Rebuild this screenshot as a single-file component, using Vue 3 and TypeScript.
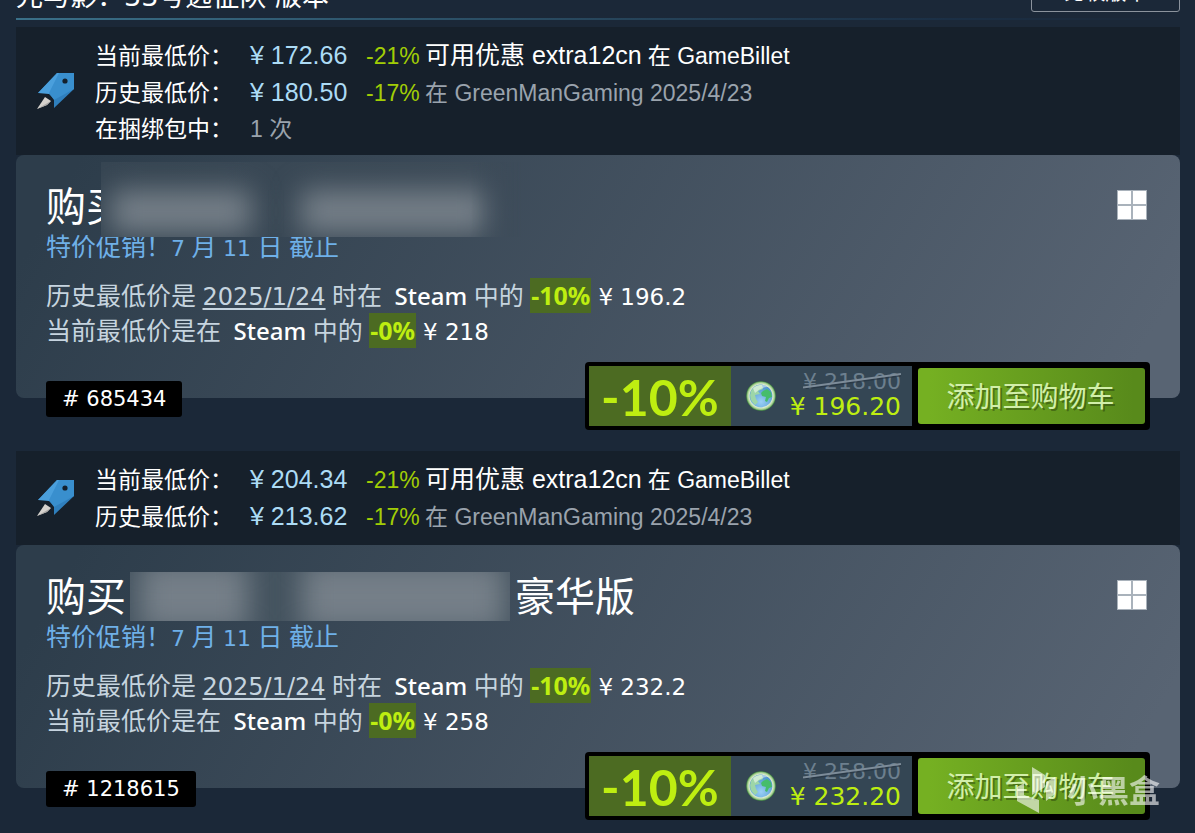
<script setup lang="ts">
interface PriceRow {
  label: string
  price?: string
  cut?: string
  promo?: string
  code?: string
  shop?: string
  count?: string
}

interface Offer {
  id: string
  suffix: string
  soft: boolean
  rows: PriceRow[]
  lowest: string
  current: string
  original: string
  final: string
}

const offers: Offer[] = [
  {
    id: '685434',
    suffix: '',
    soft: true,
    rows: [
      { label: '当前最低价：', price: '¥ 172.66', cut: '-21%', promo: '可用优惠', code: 'extra12cn', shop: '在 GameBillet' },
      { label: '历史最低价：', price: '¥ 180.50', cut: '-17%', shop: '在 GreenManGaming 2025/4/23' },
      { label: '在捆绑包中：', count: '1 次' },
    ],
    lowest: '¥ 196.2',
    current: '¥ 218',
    original: '¥ 218.00',
    final: '¥ 196.20',
  },
  {
    id: '1218615',
    suffix: '豪华版',
    soft: false,
    rows: [
      { label: '当前最低价：', price: '¥ 204.34', cut: '-21%', promo: '可用优惠', code: 'extra12cn', shop: '在 GameBillet' },
      { label: '历史最低价：', price: '¥ 213.62', cut: '-17%', shop: '在 GreenManGaming 2025/4/23' },
    ],
    lowest: '¥ 232.2',
    current: '¥ 258',
    original: '¥ 258.00',
    final: '¥ 232.20',
  },
]
</script>

<template>
  <main class="page">
    <header class="head">
      <h1>光与影：33号远征队 版本</h1>
      <button class="compare" type="button">比较版本</button>
    </header>
    <div class="rule"></div>

    <section v-for="offer in offers" :key="offer.id" class="offer">
      <div class="history">
        <svg class="rocket" viewBox="0 0 38 38" aria-hidden="true">
          <path d="M20 1H37V17L17 36V27L11 21L1 21Z" fill="#2f7fbd" />
          <path d="M20 1H37L12 22L1 21Z" fill="#4a9fdc" />
          <path d="M22 1H37V17L17 28L12 21Z" fill="#398fce" />
          <path d="M8 25L14 29L10 33L0 37Z" fill="#d6d2cd" />
          <path d="M14 29L10 33L0 37Z" fill="#a9a7a5" />
          <circle cx="28" cy="9" r="2.6" fill="#14202c" />
        </svg>
        <div class="rows">
          <div v-for="row in offer.rows" :key="row.label" class="row">
            <span class="label">{{ row.label }}</span>
            <span v-if="row.price" class="price">{{ row.price }}</span>
            <span v-if="row.cut" class="cut">{{ row.cut }}</span>
            <span v-if="row.promo" class="promo">{{ row.promo }} {{ row.code }}</span>
            <span v-if="row.shop" :class="['shop', { bright: row.promo }]">{{ row.shop }}</span>
            <span v-if="row.count" class="count">{{ row.count }}</span>
          </div>
        </div>
      </div>

      <article class="card">
        <svg class="windows" viewBox="0 0 30 30" aria-hidden="true">
          <path d="M0 0H30V30H0Z" fill="#a9b2bb" />
          <path d="M1 1H14V14H1ZM16 1H29V14H16ZM1 16H14V29H1ZM16 16H29V29H16Z" fill="#fff" />
        </svg>
        <h2 class="title">
          <span>购买</span>
          <span :class="['mask', { soft: offer.soft }]"></span>
          <span v-if="offer.suffix">{{ offer.suffix }}</span>
        </h2>
        <p class="sale">特价促销！<span class="num">7</span> 月 <span class="num">11</span> 日 截止</p>
        <p class="line">
          历史最低价是 <a class="date" href="#">2025/1/24</a> 时在
          <span class="store">Steam</span> 中的 <b class="off">-10%</b>
          <span class="value">{{ offer.lowest }}</span>
        </p>
        <p class="line">
          当前最低价是在
          <span class="store">Steam</span> 中的 <b class="off">-0%</b>
          <span class="value">{{ offer.current }}</span>
        </p>
        <footer class="foot">
          <span class="tag"># {{ offer.id }}</span>
          <div class="cart">
            <span class="discount">-10%</span>
            <div class="prices">
              <svg class="globe" viewBox="0 0 30 30" aria-hidden="true">
                <defs>
                  <radialGradient :id="'sea' + offer.id" cx="50%" cy="75%" r="70%">
                    <stop offset="0" stop-color="#9ad0f5" />
                    <stop offset="1" stop-color="#4a92cc" />
                  </radialGradient>
                  <radialGradient :id="'rim' + offer.id">
                    <stop offset="0.78" stop-color="#e2f0d2" />
                    <stop offset="0.9" stop-color="#a9d096" />
                    <stop offset="1" stop-color="#3f8b3c" />
                  </radialGradient>
                </defs>
                <circle cx="15" cy="15" r="14.8" :fill="'url(#rim' + offer.id + ')'" />
                <circle cx="15" cy="15" r="11.4" :fill="'url(#sea' + offer.id + ')'" />
                <path d="M5 10Q9 3 16 4L17 8L12 10L14 13L9 14L10 18L12 21L9 24Q2 18 5 10Z" fill="#9dd6a8" />
                <path d="M17 10L21 8L25 11L26 16L23 17L21 21L19 20L20 16L16 15L15 12Z" fill="#45bd6c" />
                <path d="M7 7Q14 1 22 6Q15 6 9 12Z" fill="#fff" opacity=".5" />
              </svg>
              <div class="amounts">
                <span class="was">{{ offer.original }}
                  <svg class="slash" viewBox="0 0 98 16" preserveAspectRatio="none" aria-hidden="true">
                    <path d="M0 16L98 2.5" stroke="#23303d" stroke-width="2" opacity=".6" />
                    <path d="M0 14.5L98 1" stroke="#7d8c99" stroke-width="1.8" />
                  </svg>
                </span>
                <span class="now">{{ offer.final }}</span>
              </div>
            </div>
            <button class="add" type="button">添加至购物车</button>
          </div>
        </footer>
      </article>
    </section>

    <div class="watermark">
      <svg viewBox="0 0 39 46" aria-hidden="true">
        <path d="M1 20L8 16V28L23 33V46L1 34ZM16 0L29 8V20L16 28ZM30 15L39 10V27L30 34Z" fill="#fff" />
      </svg>
      <span>小黑盒</span>
    </div>
  </main>
</template>

<style>
html,
body {
  margin: 0;
  background: #1b2838;
  overflow: hidden;
}
</style>

<style scoped>
.page {
  position: relative;
  box-sizing: border-box;
  height: 100vh;
  overflow: hidden;
  padding: 0 15px 0 16px;
  background: #1b2838;
  color: #fff;
  font-family: "Noto Sans", "Noto Sans CJK SC", sans-serif;
}
.head {
  display: flex;
  justify-content: space-between;
  align-items: flex-end;
  height: 18px;
}
h1 {
  margin: 0;
  padding-bottom: 2px;
  font-family: "DejaVu Sans", "Noto Sans CJK SC", sans-serif;
  font-size: 27px;
  line-height: 38px;
  font-weight: 400;
}
.compare {
  box-sizing: border-box;
  width: 149px;
  height: 44px;
  margin-bottom: 6px;
  padding: 0;
  border: 1px solid #8b939d;
  border-radius: 3px;
  background: transparent;
  color: #fff;
  font-family: "Noto Sans CJK SC", sans-serif;
  font-size: 21px;
}
.rule {
  height: 2px;
  margin-bottom: 7px;
  background: linear-gradient(to right, #3a7089, #27465c 50%, #1b2f45 80%, #1b2838);
}
.history {
  display: flex;
  box-sizing: border-box;
  min-height: 94px;
  padding: 0 21px;
  background: #16202b;
  font-family: "Liberation Sans", "Noto Sans CJK SC", sans-serif;
}
.rocket {
  align-self: center;
  flex: none;
  width: 38px;
  height: 38px;
  margin-right: 20px;
}
.rows {
  padding: 10px 0 7px;
}
.row {
  display: flex;
  align-items: baseline;
  height: 37px;
  line-height: 37px;
  font-size: 23px;
  white-space: nowrap;
}
.label {
  width: 155px;
}
.price {
  width: 116px;
  color: #acdbf5;
  font-size: 25px;
}
.cut {
  width: 59px;
  color: #a1cd05;
}
.promo {
  margin-right: 6px;
  font-size: 25px;
}
.shop,
.count {
  color: #9aa3ad;
}
.shop.bright {
  color: #fff;
}
.card {
  position: relative;
  display: flex;
  flex-direction: column;
  margin-bottom: 53px;
  padding: 26px 30px 0;
  border-radius: 8px;
  background: linear-gradient(-60deg, #586473 5%, #2d3d4b 95%);
}
.windows {
  position: absolute;
  top: 35px;
  right: 33px;
  width: 30px;
  height: 30px;
}
.title {
  display: flex;
  align-items: center;
  height: 50px;
  margin: 0;
  font-size: 40px;
  line-height: 50px;
  font-weight: 400;
  white-space: nowrap;
}
.mask {
  position: relative;
  overflow: hidden;
  width: 380px;
  height: 49px;
  margin: 0 5px 0 4px;
  background: #44535f;
}
.mask::before,
.mask::after {
  content: "";
  position: absolute;
  top: -10px;
  bottom: -10px;
  background: #757f88;
  filter: blur(14px);
}
.mask::before {
  left: 10px;
  width: 108px;
}
.mask::after {
  left: 172px;
  right: 5px;
}
.mask.soft {
  align-self: flex-end;
  width: 420px;
  height: 75px;
  margin: 0 0 -6px -25px;
  background: linear-gradient(to right, #364552, #3e4c59);
  mask-image: linear-gradient(to right, #000 88%, transparent), linear-gradient(#000, transparent 12%);
  mask-image: linear-gradient(to right, #000 88%, transparent);
}
.mask.soft::before,
.mask.soft::after {
  top: 28px;
  bottom: 4px;
}
.mask.soft::before {
  left: 10px;
  width: 140px;
}
.mask.soft::after {
  left: 200px;
  right: 32px;
}
.sale {
  height: 28px;
  margin: 1px 0 18px;
  color: #6fb0e8;
  font-size: 25px;
  line-height: 28px;
}
.line {
  height: 35px;
  margin: 0;
  color: #c6d4df;
  font-size: 25px;
  line-height: 35px;
  white-space: nowrap;
}
.num {
  font-family: "DejaVu Sans", sans-serif;
  font-size: 22px;
}
.date {
  color: inherit;
  font-family: "DejaVu Sans", sans-serif;
  font-size: 24px;
  text-decoration-thickness: 2px;
  text-underline-offset: 3px;
}
.store {
  margin-left: 6px;
  color: #fff;
  font-size: 24px;
  font-weight: 500;
}
.off {
  display: inline-block;
  height: 35px;
  background: #4c6b22;
  color: #beee11;
  font-size: 25px;
  line-height: 35px;
  vertical-align: top;
  padding: 0 1px;
}
.value {
  margin-left: 7px;
  color: #fff;
  font-family: "DejaVu Sans", sans-serif;
  font-size: 23px;
}
.foot {
  display: flex;
  justify-content: space-between;
  align-items: flex-end;
  margin: 14px 0 -32px;
}
.tag {
  margin-bottom: 13px;
  padding: 0 16px;
  border-radius: 3px;
  background: #000;
  font-family: "DejaVu Sans", sans-serif;
  font-size: 21px;
  line-height: 36px;
}
.cart {
  display: flex;
  align-items: center;
  padding: 4px 5px 4px 4px;
  border-radius: 4px;
  background: #000;
}
.discount {
  height: 60px;
  padding: 0 12px;
  background: #4c6b22;
  color: #beee11;
  font-family: Lato, sans-serif;
  font-size: 50px;
  font-weight: 700;
  line-height: 62px;
}
.prices {
  display: flex;
  align-items: center;
  gap: 14px;
  height: 60px;
  margin-right: 6px;
  padding: 0 11px 0 15px;
  background: #344654;
  font-family: "DejaVu Sans", sans-serif;
}
.globe {
  width: 30px;
  height: 30px;
}
.amounts {
  display: flex;
  flex-direction: column;
  align-items: flex-end;
  padding-bottom: 4px;
}
.was {
  position: relative;
  color: #6c7f8e;
  font-size: 22px;
  line-height: 25px;
}
.slash {
  position: absolute;
  left: 0;
  top: 4px;
  width: 100%;
  height: 16px;
}
.now {
  color: #beee11;
  font-size: 25px;
  line-height: 25px;
}
.add {
  width: 227px;
  height: 56px;
  padding: 0 2px 2px 0;
  border: 0;
  border-radius: 3px;
  background: linear-gradient(to right, #75b022 5%, #588a1b 95%);
  color: #d2efa9;
  font-family: "Noto Sans CJK SC", sans-serif;
  font-size: 28px;
  text-shadow: 2px 2px 0 rgba(0, 0, 0, 0.3);
}
.watermark {
  position: absolute;
  right: 35px;
  bottom: 20px;
  display: flex;
  align-items: center;
  gap: 12px;
  opacity: 0.6;
  font-size: 31px;
  line-height: 46px;
  font-weight: 700;
}
.watermark svg {
  width: 39px;
  height: 46px;
}
</style>
